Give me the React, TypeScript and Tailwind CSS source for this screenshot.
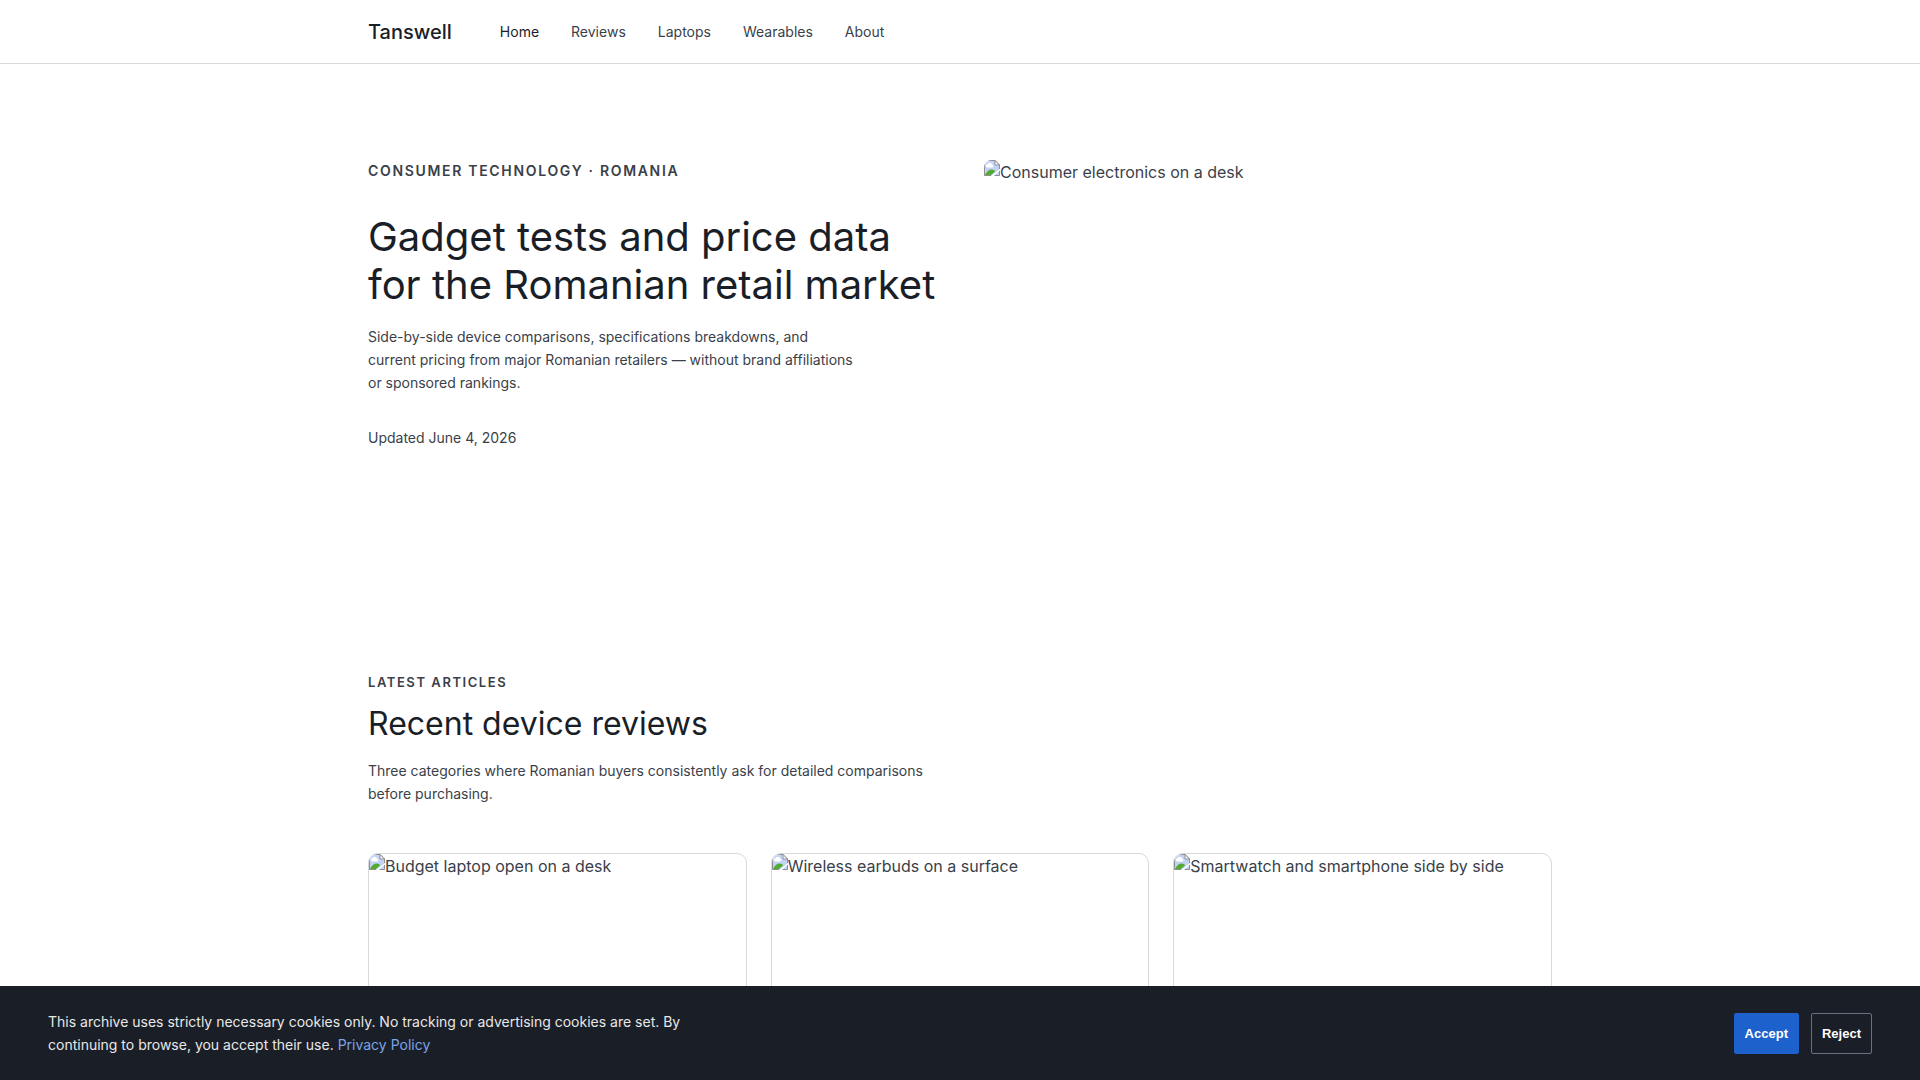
const NAV = ['Home', 'Reviews', 'Laptops', 'Wearables', 'About']

const ARTICLES = [
  'Budget laptop open on a desk',
  'Wireless earbuds on a surface',
  'Smartwatch and smartphone side by side',
]

/** Placeholder glyph: torn page with a cloud and a hill. */
function ImageIcon() {
  return (
    <svg aria-hidden className="h-4 w-4 shrink-0" viewBox="0 0 16 16" fill="none">
      <path d="M0 0H11L16 5V9L7 16H0Z" fill="#c2d3f6" />
      <path d="M3 7.5a1.8 1.8 0 0 1 .6-3.4 2.4 2.4 0 0 1 4.5.4 1.6 1.6 0 0 1 .4 3Z" fill="#fff" />
      <path d="M1 15C2.500 11.500 5 9.500 7.500 9.500S11 11 11 11.500L7 15Z" fill="#54ab32" />
      <path d="M10.500 15.500 16 10.500V15.500Z" fill="#c2d3f6" />
      <path d="M0.500 0V15.500H7M.5.5H11L15.500 5V9M15.500 11V15.500H10.500" stroke="#8f8f8f" />
      <path d="M11 .5V5H15.500Z" fill="#fff" stroke="#8f8f8f" />
    </svg>
  )
}

function Picture({ label, className }: { label: string; className: string }) {
  return (
    <div role="img" aria-label={label} className={`flex items-start overflow-hidden ${className}`}>
      <ImageIcon />
      <span className="text-base leading-6">{label}</span>
    </div>
  )
}

export default function App() {
  return (
    <div className="min-h-screen bg-white font-['Inter',sans-serif] text-sm leading-[23px] text-[#3a3f4a]">
      <header className="border-b border-[#d9d9d9]">
        <div className="mx-auto flex h-[63px] max-w-7xl items-center gap-12 px-12">
          <a href="#" className="text-xl font-medium text-[#1a1e27]">
            Tanswell
          </a>
          <nav className="flex gap-8">
            {NAV.map((n, i) => (
              <a key={n} href="#" className={i === 0 ? 'text-[#1a1e27]' : 'text-[#3a3f4a]'}>
                {n}
              </a>
            ))}
          </nav>
        </div>
      </header>

      <main className="mx-auto max-w-7xl px-12 pb-32">
        {/* hero */}
        <section className="grid grid-cols-2 gap-12 py-24">
          <div>
            <p className="leading-[21px] font-semibold uppercase tracking-[0.12em]">
              Consumer technology · Romania
            </p>
            <h1 className="mt-8 text-[40px] leading-[48px] text-[#1a1e27]">
              Gadget tests and price data for the Romanian retail market
            </h1>
            <p className="mt-4 max-w-[490px]">
              Side-by-side device comparisons, specifications breakdowns, and current pricing from
              major Romanian retailers — without brand affiliations or sponsored rankings.
            </p>
            <p className="mt-8">Updated June 4, 2026</p>
          </div>
          <Picture label="Consumer electronics on a desk" className="h-80 rounded-lg" />
        </section>

        {/* latest articles */}
        <section className="pt-24">
          <p className="text-[13px] leading-[21px] font-semibold uppercase tracking-[0.12em]">
            Latest articles
          </p>
          <h2 className="mt-3 text-[32px] leading-[38px] text-[#1a1e27]">Recent device reviews</h2>
          <p className="mt-4 max-w-[560px]">
            Three categories where Romanian buyers consistently ask for detailed comparisons before
            purchasing.
          </p>
          <div className="mt-12 grid grid-cols-3 gap-6">
            {ARTICLES.map((label) => (
              <article key={label} className="overflow-hidden rounded-[10px] border border-[#d9d9d9]">
                <Picture label={label} className="h-52" />
              </article>
            ))}
          </div>
        </section>
      </main>

      {/* cookie bar */}
      <div className="fixed inset-x-0 bottom-0 flex items-center justify-between gap-6 bg-[#1a1e27] px-12 py-6 text-[#e8e8e8]">
        <p className="max-w-[640px]">
          This archive uses strictly necessary cookies only. No tracking or advertising cookies are
          set. By continuing to browse, you accept their use.{' '}
          <a href="#" className="text-[#7ba4e6]">
            Privacy Policy
          </a>
        </p>
        <div className="flex gap-3 font-['Liberation_Sans',sans-serif] text-[13px] font-bold text-white">
          <button type="button" className="h-[41px] rounded-xs border border-[#1d62cc] bg-[#1d62cc] px-2.5">
            Accept
          </button>
          <button type="button" className="h-[41px] rounded-xs border border-[#6b707c] px-2.5">
            Reject
          </button>
        </div>
      </div>
    </div>
  )
}
